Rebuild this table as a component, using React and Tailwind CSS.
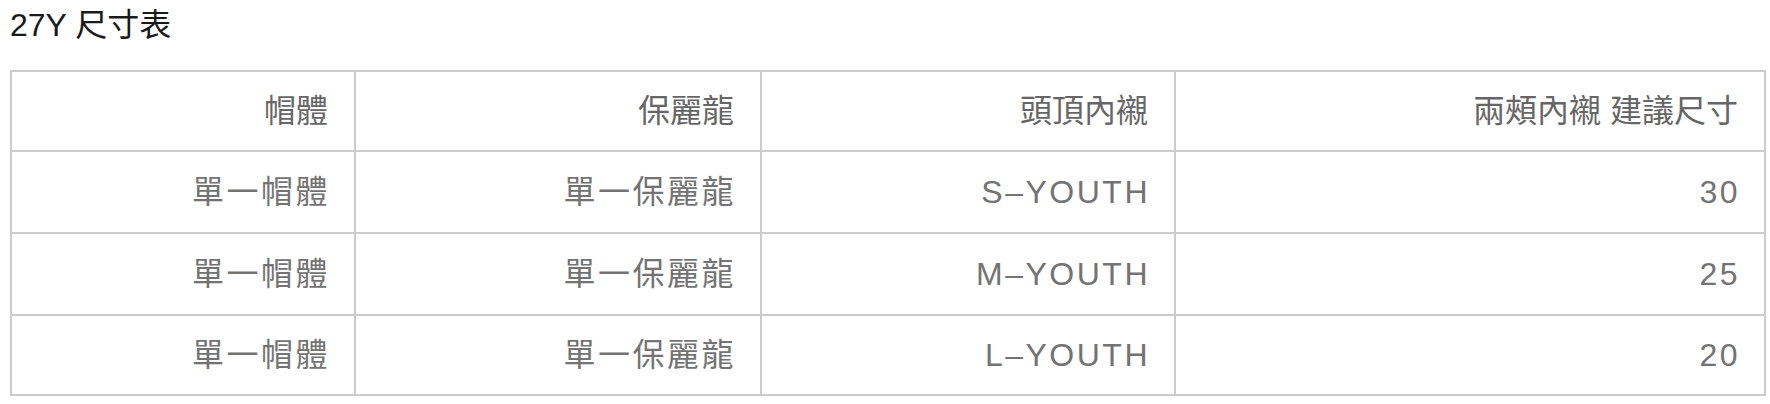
import React from "react";

const header = ["帽體", "保麗龍", "頭頂內襯", "兩頰內襯 建議尺寸"];
const rows = [
  ["單一帽體", "單一保麗龍", "S–YOUTH", "30"],
  ["單一帽體", "單一保麗龍", "M–YOUTH", "25"],
  ["單一帽體", "單一保麗龍", "L–YOUTH", "20"],
];
const rowHeights = ["h-[82px]", "h-[82px]", "h-[80px]"];

export default function App() {
  return (
    <div className="w-[1770px] h-[404px] bg-white pl-[10px] pt-[7px] font-['Liberation_Sans','Noto_Sans_CJK_TC',sans-serif]">
      <h2 className="text-[32px] leading-[37px] text-[#1a1a1a] font-normal">27Y 尺寸表</h2>
      <div className="mt-[26px] w-[1756px] grid grid-cols-[344px_406px_414px_590px] border-r-2 border-b-2 border-[#cccccc]">
        {header.map((h, i) => (
          <div
            key={"h" + i}
            className="h-[80px] border-l-2 border-t-2 border-[#cccccc] flex items-center justify-end pr-[26px] text-[32px] text-[#666666]"
          >
            {h}
          </div>
        ))}
        {rows.map((r, ri) =>
          r.map((c, ci) => (
            <div
              key={ri + "-" + ci}
              className={`${rowHeights[ri]} border-l-2 border-t-2 border-[#cccccc] flex items-center justify-end pr-[24px] text-[32px] tracking-[2.5px] text-[#737373]`}
            >
              {c}
            </div>
          ))
        )}
      </div>
    </div>
  );
}
